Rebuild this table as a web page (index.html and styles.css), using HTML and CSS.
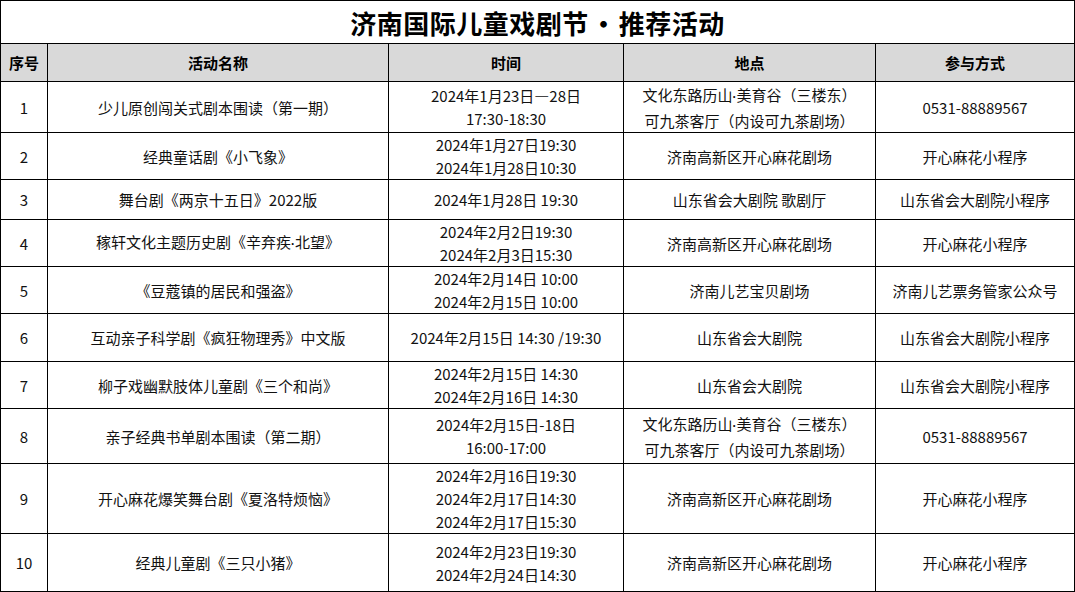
FILE: index.html
```html
<!DOCTYPE html>
<html lang="zh-CN">
<head>
<meta charset="utf-8">
<title>济南国际儿童戏剧节·推荐活动</title>
<link rel="stylesheet" href="styles.css">
</head>
<body>
<table class="sheet">
  <colgroup>
    <col class="c-no">
    <col class="c-name">
    <col class="c-time">
    <col class="c-place">
    <col class="c-way">
  </colgroup>
  <tr class="r-title"><td colspan="5" class="title">济南国际儿童戏剧节<span class="tdot">·</span>推荐活动</td></tr>
  <tr class="r-head head">
    <td>序号</td><td>活动名称</td><td>时间</td><td>地点</td><td>参与方式</td>
  </tr>
  <tr class="r1">
    <td>1</td><td>少儿原创闯关式剧本围读（第一期）</td>
    <td>2024年1月23日—28日<br>17:30-18:30</td>
    <td>文化东路历山<span class="dot">·</span>美育谷（三楼东）<br>可九茶客厅（内设可九茶剧场）</td>
    <td>0531-88889567</td>
  </tr>
  <tr class="r2">
    <td>2</td><td>经典童话剧《小飞象》</td>
    <td>2024年1月27日19:30<br>2024年1月28日10:30</td>
    <td>济南高新区开心麻花剧场</td><td>开心麻花小程序</td>
  </tr>
  <tr class="r3">
    <td>3</td><td>舞台剧《两京十五日》2022版</td>
    <td>2024年1月28日 19:30</td>
    <td>山东省会大剧院 歌剧厅</td><td>山东省会大剧院小程序</td>
  </tr>
  <tr class="r4">
    <td>4</td><td>稼轩文化主题历史剧《辛弃疾<span class="dot">·</span>北望》</td>
    <td>2024年2月2日19:30<br>2024年2月3日15:30</td>
    <td>济南高新区开心麻花剧场</td><td>开心麻花小程序</td>
  </tr>
  <tr class="r5">
    <td>5</td><td>《豆蔻镇的居民和强盗》</td>
    <td>2024年2月14日 10:00<br>2024年2月15日 10:00</td>
    <td>济南儿艺宝贝剧场</td><td>济南儿艺票务管家公众号</td>
  </tr>
  <tr class="r6">
    <td>6</td><td>互动亲子科学剧《疯狂物理秀》中文版</td>
    <td>2024年2月15日 14:30 /19:30</td>
    <td>山东省会大剧院</td><td>山东省会大剧院小程序</td>
  </tr>
  <tr class="r7">
    <td>7</td><td>柳子戏幽默肢体儿童剧《三个和尚》</td>
    <td>2024年2月15日 14:30<br>2024年2月16日 14:30</td>
    <td>山东省会大剧院</td><td>山东省会大剧院小程序</td>
  </tr>
  <tr class="r8">
    <td>8</td><td>亲子经典书单剧本围读（第二期）</td>
    <td>2024年2月15日-18日<br>16:00-17:00</td>
    <td>文化东路历山<span class="dot">·</span>美育谷（三楼东）<br>可九茶客厅（内设可九茶剧场）</td>
    <td>0531-88889567</td>
  </tr>
  <tr class="r9">
    <td>9</td><td>开心麻花爆笑舞台剧《夏洛特烦恼》</td>
    <td>2024年2月16日19:30<br>2024年2月17日14:30<br>2024年2月17日15:30</td>
    <td>济南高新区开心麻花剧场</td><td>开心麻花小程序</td>
  </tr>
  <tr class="r10">
    <td>10</td><td>经典儿童剧《三只小猪》</td>
    <td>2024年2月23日19:30<br>2024年2月24日14:30</td>
    <td>济南高新区开心麻花剧场</td><td>开心麻花小程序</td>
  </tr>
</table>
</body>
</html>
```

FILE: styles.css
```css
html, body {
  margin: 0;
  padding: 0;
  background: #ffffff;
}

.sheet {
  border-collapse: collapse;
  table-layout: fixed;
  width: 1074px;
  font-family: "Microsoft YaHei", "Noto Sans CJK SC", sans-serif;
  font-size: 15px;
  line-height: 23px;
  color: #111;
}

.sheet td {
  border: 1px solid #000;
  text-align: center;
  vertical-align: middle;
  padding: 0;
  white-space: nowrap;
  overflow: hidden;
}

.c-no { width: 47px; }
.c-name { width: 341px; }
.c-time { width: 235px; }
.c-place { width: 252px; }
.c-way { width: 199px; }

.title {
  font-size: 26px;
  font-weight: 700;
  letter-spacing: 0.5px;
  color: #000;
}

.tdot {
  display: inline-block;
  width: 30px;
  text-align: center;
}

.dot {
  font-family: "Liberation Sans", sans-serif;
  font-weight: 700;
  font-size: 12px;
}

.head td {
  background: #d9d9d9;
  font-weight: 700;
  color: #000;
}

.r-title td { height: 42px; }
.r-head td { height: 37px; }
.r1 td { height: 50px; }
.r2 td { height: 46px; }
.r3 td { height: 39px; }
.r4 td { height: 42px; }
.r5 td { height: 46px; }
.r6 td { height: 47px; }
.r7 td { height: 46px; }
.r8 td { height: 54px; }
.r9 td { height: 68px; }
.r10 td { height: 57px; }
```
